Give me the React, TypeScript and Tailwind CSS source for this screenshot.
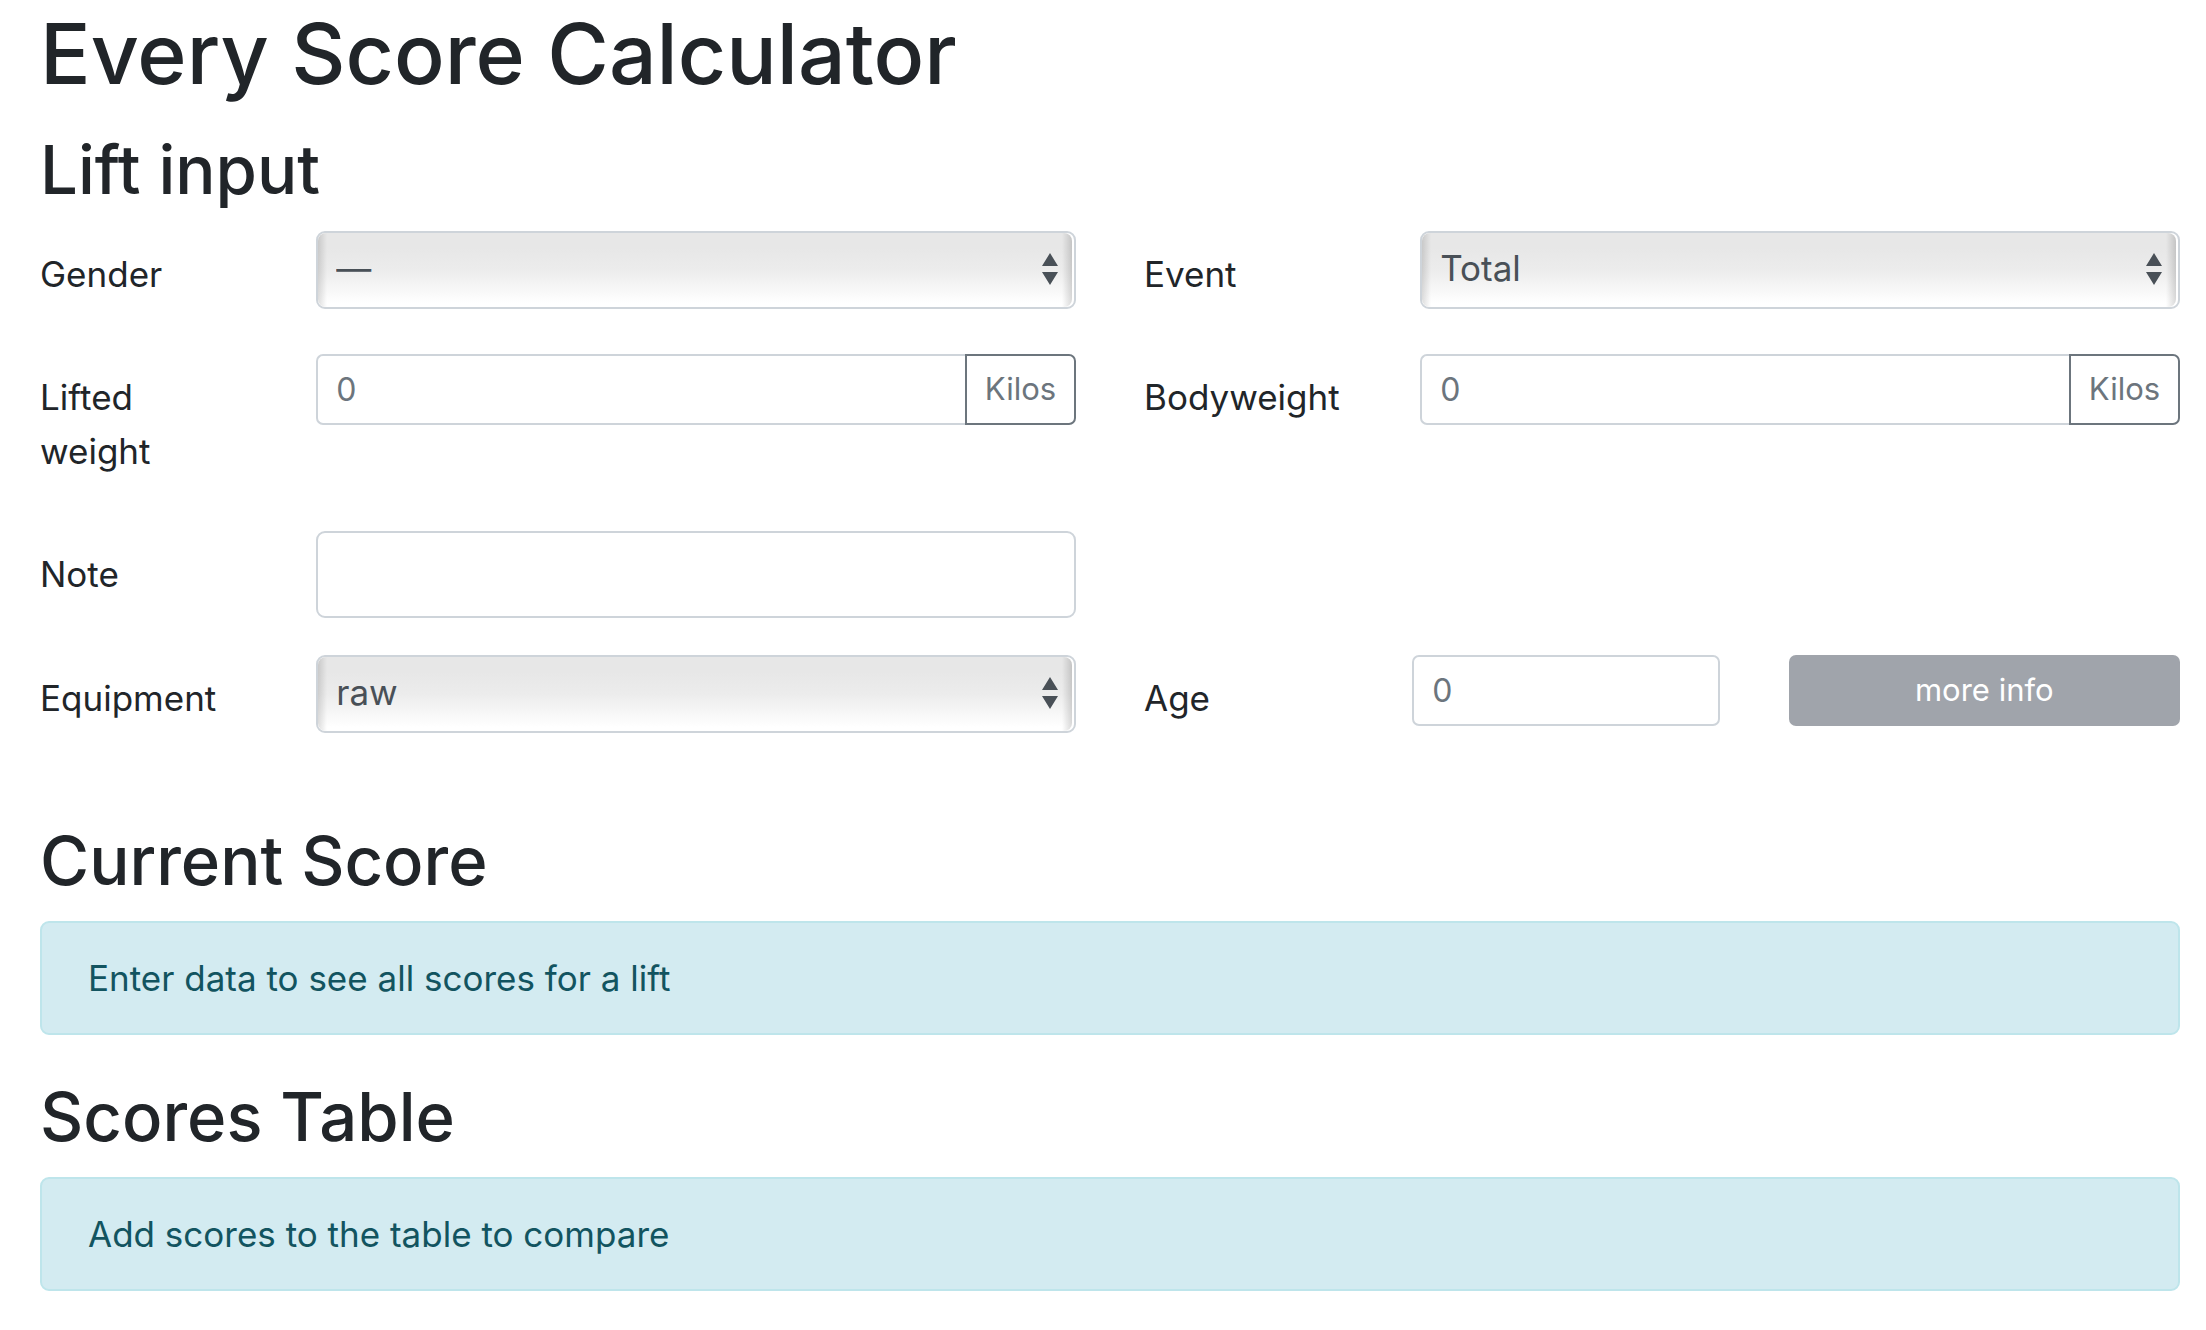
import type { ReactNode } from "react";

type Option = { value: string; label: string };

const genders: Option[] = [
  { value: "", label: "—" },
  { value: "M", label: "Male" },
  { value: "F", label: "Female" },
];

const events: Option[] = [
  { value: "total", label: "Total" },
  { value: "bench", label: "Bench" },
];

const equipment: Option[] = [
  { value: "raw", label: "raw" },
  { value: "equipped", label: "equipped" },
];

function Label({ id, children }: { id: string; children: ReactNode }) {
  return (
    <label htmlFor={id} className="pt-4 text-[35px] leading-[54px]">
      {children}
    </label>
  );
}

function Field({ id, label, children }: { id: string; label: string; children: ReactNode }) {
  return (
    <div className="grid grid-cols-[3fr_11fr] items-start gap-[69px]">
      <Label id={id}>{label}</Label>
      {children}
    </div>
  );
}

function SelectBox({ id, options }: { id: string; options: Option[] }) {
  return (
    <div className="relative h-[78px] rounded-[9px] border-2 border-[#ced4da] bg-white pr-[2px]">
      <select
        id={id}
        className="block h-full w-full appearance-none rounded-[8px] bg-[linear-gradient(90deg,rgba(0,0,0,0.13),transparent_9px),linear-gradient(270deg,rgba(0,0,0,0.15),transparent_10px),linear-gradient(180deg,#e7e7e7_20%,#ececec_50%,#ffffff_95%)] pr-12 pb-1 pl-[18px] text-[35px] text-[#495057]"
      >
        {options.map((o) => (
          <option key={o.value} value={o.value}>
            {o.label}
          </option>
        ))}
      </select>
      <svg
        className="pointer-events-none absolute top-5 right-4 h-8 w-4"
        viewBox="0 0 16 32"
        fill="#495057"
        aria-hidden="true"
      >
        <path d="M8 0l8 13H0zM8 32l8-13H0z" />
      </svg>
    </div>
  );
}

function WeightInput({ id }: { id: string }) {
  return (
    <div className="flex h-[71px]">
      <input
        id={id}
        type="text"
        inputMode="decimal"
        placeholder="0"
        className="min-w-0 flex-1 rounded-l-[7px] border-2 border-r-0 border-[#ced4da] bg-white pl-[18px] text-[32px] text-[#495057] placeholder:text-[#6c757d]"
      />
      <button
        type="button"
        className="w-[111px] rounded-r-[7px] border-2 border-[#6c757d] text-[31px] text-[#6c757d]"
      >
        Kilos
      </button>
    </div>
  );
}

function Notice({ children }: { children: ReactNode }) {
  return (
    <div
      role="alert"
      className="rounded-[9px] border-2 border-[#bee5eb] bg-[#d3ebf1] px-[46px] py-7 text-[35px] leading-[54px] text-[#125460]"
    >
      {children}
    </div>
  );
}

export default function App() {
  return (
    <main className="pr-[26px] pl-10 font-['Inter',sans-serif] text-[#212529]">
      <h1 className="text-[84px] leading-[108px] font-medium">Every Score Calculator</h1>
      <form>
        <h2 className="mt-[18px] text-[67px] leading-[88px] font-medium">Lift input</h2>
        <div className="mt-[17px] grid grid-cols-2 gap-x-[68px]">
          <div className="min-h-[123px]">
            <Field id="gender" label="Gender">
              <SelectBox id="gender" options={genders} />
            </Field>
          </div>
          <div className="min-h-[123px]">
            <Field id="event" label="Event">
              <SelectBox id="event" options={events} />
            </Field>
          </div>
          <div className="min-h-[177px]">
            <Field id="lifted" label="Lifted weight">
              <WeightInput id="lifted" />
            </Field>
          </div>
          <div className="min-h-[177px]">
            <Field id="bodyweight" label="Bodyweight">
              <WeightInput id="bodyweight" />
            </Field>
          </div>
          <div className="col-start-1 min-h-[124px]">
            <Field id="note" label="Note">
              <input
                id="note"
                type="text"
                className="h-[87px] w-full rounded-[9px] border-2 border-[#ced4da] bg-white px-[18px] text-[35px] text-[#495057]"
              />
            </Field>
          </div>
          <div className="col-start-1">
            <Field id="equipment" label="Equipment">
              <SelectBox id="equipment" options={equipment} />
            </Field>
          </div>
          <div className="grid grid-cols-[199fr_307fr_391fr] items-start gap-[69px]">
            <Label id="age">Age</Label>
            <input
              id="age"
              type="text"
              inputMode="numeric"
              placeholder="0"
              className="h-[71px] w-full min-w-0 rounded-[7px] border-2 border-[#ced4da] bg-white pl-[18px] text-[32px] text-[#495057] placeholder:text-[#6c757d]"
            />
            <button
              type="button"
              className="h-[71px] w-full rounded-[7px] bg-[#a0a4ab] text-[31px] text-white"
            >
              more info
            </button>
          </div>
        </div>
      </form>
      <section className="mt-[84px]">
        <h2 className="mb-4 text-[67px] leading-[88px] font-medium">Current Score</h2>
        <Notice>Enter data to see all scores for a lift</Notice>
      </section>
      <section className="mt-[38px]">
        <h2 className="mb-4 text-[67px] leading-[88px] font-medium">Scores Table</h2>
        <Notice>Add scores to the table to compare</Notice>
      </section>
    </main>
  );
}
